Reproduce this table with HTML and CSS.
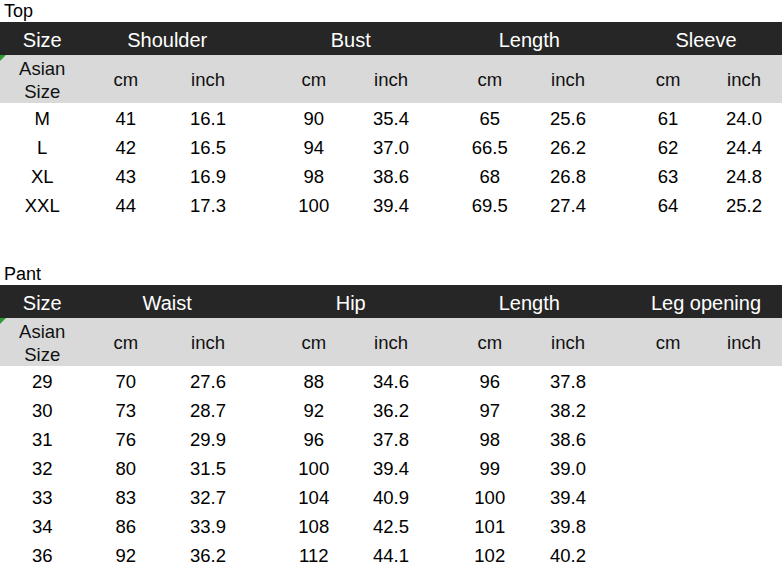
FILE: index.html
```html
<!DOCTYPE html>
<html>
<head>
<meta charset="utf-8">
<link rel="stylesheet" href="styles.css">
</head>
<body>
<div class="sheet">
  <div class="label">Top</div>
  <div class="tbl">
    <div class="row head">
      <div>Size</div>
      <div class="span g1">Shoulder</div>
      <div class="span">Bust</div>
      <div class="span">Length</div>
      <div class="span g4">Sleeve</div>
    </div>
    <div class="row sub">
      <div class="asian">Asian<br>Size</div>
      <div>cm</div><div>inch</div><div>cm</div><div>inch</div><div>cm</div><div>inch</div><div>cm</div><div>inch</div>
    </div>
    <div class="row data"><div>M</div><div>41</div><div>16.1</div><div>90</div><div>35.4</div><div>65</div><div>25.6</div><div>61</div><div>24.0</div></div>
    <div class="row data"><div>L</div><div>42</div><div>16.5</div><div>94</div><div>37.0</div><div>66.5</div><div>26.2</div><div>62</div><div>24.4</div></div>
    <div class="row data"><div>XL</div><div>43</div><div>16.9</div><div>98</div><div>38.6</div><div>68</div><div>26.8</div><div>63</div><div>24.8</div></div>
    <div class="row data"><div>XXL</div><div>44</div><div>17.3</div><div>100</div><div>39.4</div><div>69.5</div><div>27.4</div><div>64</div><div>25.2</div></div>
  </div>

  <div class="label second">Pant</div>
  <div class="tbl">
    <div class="row head">
      <div>Size</div>
      <div class="span g1">Waist</div>
      <div class="span">Hip</div>
      <div class="span">Length</div>
      <div class="span g4">Leg opening</div>
    </div>
    <div class="row sub">
      <div class="asian">Asian<br>Size</div>
      <div>cm</div><div>inch</div><div>cm</div><div>inch</div><div>cm</div><div>inch</div><div>cm</div><div>inch</div>
    </div>
    <div class="row data"><div>29</div><div>70</div><div>27.6</div><div>88</div><div>34.6</div><div>96</div><div>37.8</div><div></div><div></div></div>
    <div class="row data"><div>30</div><div>73</div><div>28.7</div><div>92</div><div>36.2</div><div>97</div><div>38.2</div><div></div><div></div></div>
    <div class="row data"><div>31</div><div>76</div><div>29.9</div><div>96</div><div>37.8</div><div>98</div><div>38.6</div><div></div><div></div></div>
    <div class="row data"><div>32</div><div>80</div><div>31.5</div><div>100</div><div>39.4</div><div>99</div><div>39.0</div><div></div><div></div></div>
    <div class="row data"><div>33</div><div>83</div><div>32.7</div><div>104</div><div>40.9</div><div>100</div><div>39.4</div><div></div><div></div></div>
    <div class="row data"><div>34</div><div>86</div><div>33.9</div><div>108</div><div>42.5</div><div>101</div><div>39.8</div><div></div><div></div></div>
    <div class="row data"><div>36</div><div>92</div><div>36.2</div><div>112</div><div>44.1</div><div>102</div><div>40.2</div><div></div><div></div></div>
  </div>
</div>
</body>
</html>
```

FILE: styles.css
```css
html, body {
  margin: 0;
  padding: 0;
  background: #fff;
}
.sheet {
  width: 782px;
  height: 577px;
  overflow: hidden;
  font-family: "Liberation Sans", Arial, sans-serif;
  color: #000;
}
.label {
  height: 22px;
  line-height: 22px;
  font-size: 18px;
  padding-left: 4px;
}
.label.second {
  margin-top: 44px;
}
.row {
  display: grid;
  grid-template-columns: 84.5px 82.5px 94px 91.5px 88px 88.5px 89px 88px 76px;
  align-items: center;
  text-align: center;
}
.head {
  background: #262626;
  color: #fff;
  height: 33px;
  font-size: 20px;
}
.head > div {
  padding-top: 3px;
}
.head .span {
  grid-column: span 2;
}
.head .g1 {
  padding-right: 11px;
}
.head .g4 {
  padding-left: 12px;
}
.sub {
  background: #d9d9d9;
  height: 48px;
  font-size: 18.5px;
  color: #111;
  position: relative;
}
.sub > div {
  padding-top: 2px;
}
.sub::before {
  content: "";
  position: absolute;
  left: 0;
  top: 0;
  border-top: 6px solid #2f9a35;
  border-right: 6px solid transparent;
}
.asian {
  line-height: 23px;
}
.data {
  height: 29px;
  font-size: 18.5px;
}
.data > div {
  padding-top: 3px;
}
.sub > div:nth-child(3), .data > div:nth-child(3) { padding-right: 12px; }
.sub > div:nth-child(4), .data > div:nth-child(4) { padding-left: 14px; }
.sub > div:nth-child(5), .data > div:nth-child(5) { padding-right: 11px; }
.sub > div:nth-child(6), .data > div:nth-child(6) { padding-left: 10px; }
.sub > div:nth-child(7), .data > div:nth-child(7) { padding-right: 11px; }
.sub > div:nth-child(8), .data > div:nth-child(8) { padding-left: 12px; }
```
